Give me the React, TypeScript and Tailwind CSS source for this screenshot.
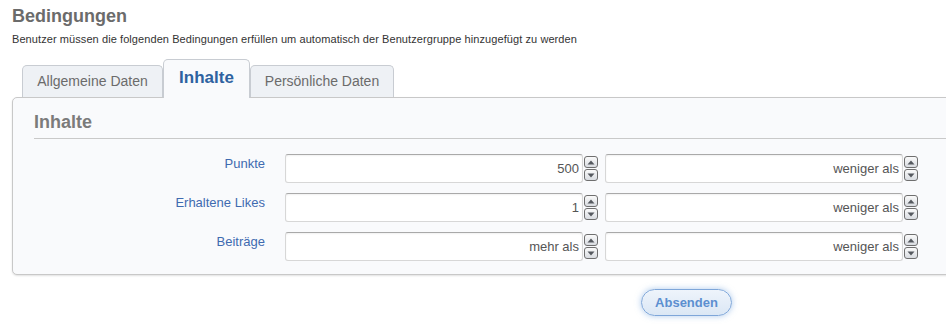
import React from "react";

const font = { fontFamily: '"Trebuchet MS", "Liberation Sans", Arial, sans-serif' };

function Spinner() {
  return (
    <div className="flex flex-col gap-[1px] ml-[1px]">
      {[0, 1].map((i) => (
        <div
          key={i}
          className="w-[14px] h-[12px] rounded-[3px] border border-[#6f6f6f] bg-gradient-to-b from-[#fafafa] to-[#d9dce1] flex items-center justify-center"
        >
          <svg width="8" height="5" viewBox="0 0 8 5">
            {i === 0 ? (
              <polygon points="4,0.5 7.5,4.5 0.5,4.5" fill="#55595f" />
            ) : (
              <polygon points="0.5,0.5 7.5,0.5 4,4.5" fill="#55595f" />
            )}
          </svg>
        </div>
      ))}
    </div>
  );
}

function Field({ value }: { value: string }) {
  return (
    <div className="flex items-center">
      <div className="w-[298px] h-[29px] bg-white rounded-[3px] border border-[#d7d7d7] border-t-[#a9a9a9] shadow-[inset_0_1px_2px_rgba(0,0,0,0.06)] flex items-center justify-end pr-[3px] text-[13px] text-[#555]">
        {value}
      </div>
      <Spinner />
    </div>
  );
}

function Row({ label, a, b }: { label: string; a: string; b: string }) {
  return (
    <div className="flex items-center h-[29px]">
      <div className="w-[252px] text-right text-[13px] text-[#3f6ab0] -mt-[9px]">{label}</div>
      <div className="ml-[20px] flex gap-[7px]">
        <Field value={a} />
        <Field value={b} />
      </div>
    </div>
  );
}

export default function App() {
  return (
    <div className="w-[946px] h-[333px] bg-white overflow-hidden" style={font}>
      <div className="pl-[12px] pt-[5px]">
        <div className="text-[18px] font-bold text-[#6b6b6b] leading-[22px]">Bedingungen</div>
        <div className="text-[11px] text-[#333] leading-[14px] mt-[5px] tracking-[0.08px]">
          Benutzer müssen die folgenden Bedingungen erfüllen um automatisch der Benutzergruppe hinzugefügt zu werden
        </div>
      </div>
      <div className="flex items-end pl-[22px] mt-[13px] h-[38px]">
        <div className="w-[141px] h-[32px] border border-b-0 border-[#c8ccd2] rounded-t-[5px] bg-[#eef1f5] flex items-center justify-center text-[14px] text-[#6b6b6b]">
          Allgemeine Daten
        </div>
        <div className="w-[87px] h-[39px] border border-b-0 border-[#c8ccd2] rounded-t-[5px] bg-[#f9fafc] flex items-center justify-center text-[17px] font-bold text-[#2e62a0] relative z-10 -mb-[1px] pb-[2px]">
          Inhalte
        </div>
        <div className="w-[144px] h-[32px] border border-b-0 border-[#c8ccd2] rounded-t-[5px] bg-[#eef1f5] flex items-center justify-center text-[14px] text-[#6b6b6b]">
          Persönliche Daten
        </div>
      </div>
      <div className="ml-[12px] w-[950px] h-[178px] border border-[#c8c8c8] rounded-[5px] bg-[#f9fafc] shadow-[0_1px_2px_rgba(0,0,0,0.12)] pl-[21px] pt-[13px]">
        <div className="text-[18px] font-bold text-[#7b7b7b] leading-[22px] pb-[5px] border-b border-[#c9c9c9]">Inhalte</div>
        <div className="flex flex-col gap-[10px] mt-[15px] -ml-[21px]">
          <Row label="Punkte" a="500" b="weniger als" />
          <Row label="Erhaltene Likes" a="1" b="weniger als" />
          <Row label="Beiträge" a="mehr als" b="weniger als" />
        </div>
      </div>
      <div className="flex justify-center pl-[427px] mt-[14px] w-[946px]">
        <div className="w-[91px] h-[27px] rounded-full border border-[#7ea6d9] bg-gradient-to-b from-[#eef4fb] to-[#dbe7f5] shadow-[0_0_6px_rgba(110,160,220,0.55)] flex items-center justify-center text-[13px] font-bold text-[#5c8fd0]" style={{ fontFamily: '"Liberation Sans", Arial, sans-serif' }}>
          Absenden
        </div>
      </div>
    </div>
  );
}
